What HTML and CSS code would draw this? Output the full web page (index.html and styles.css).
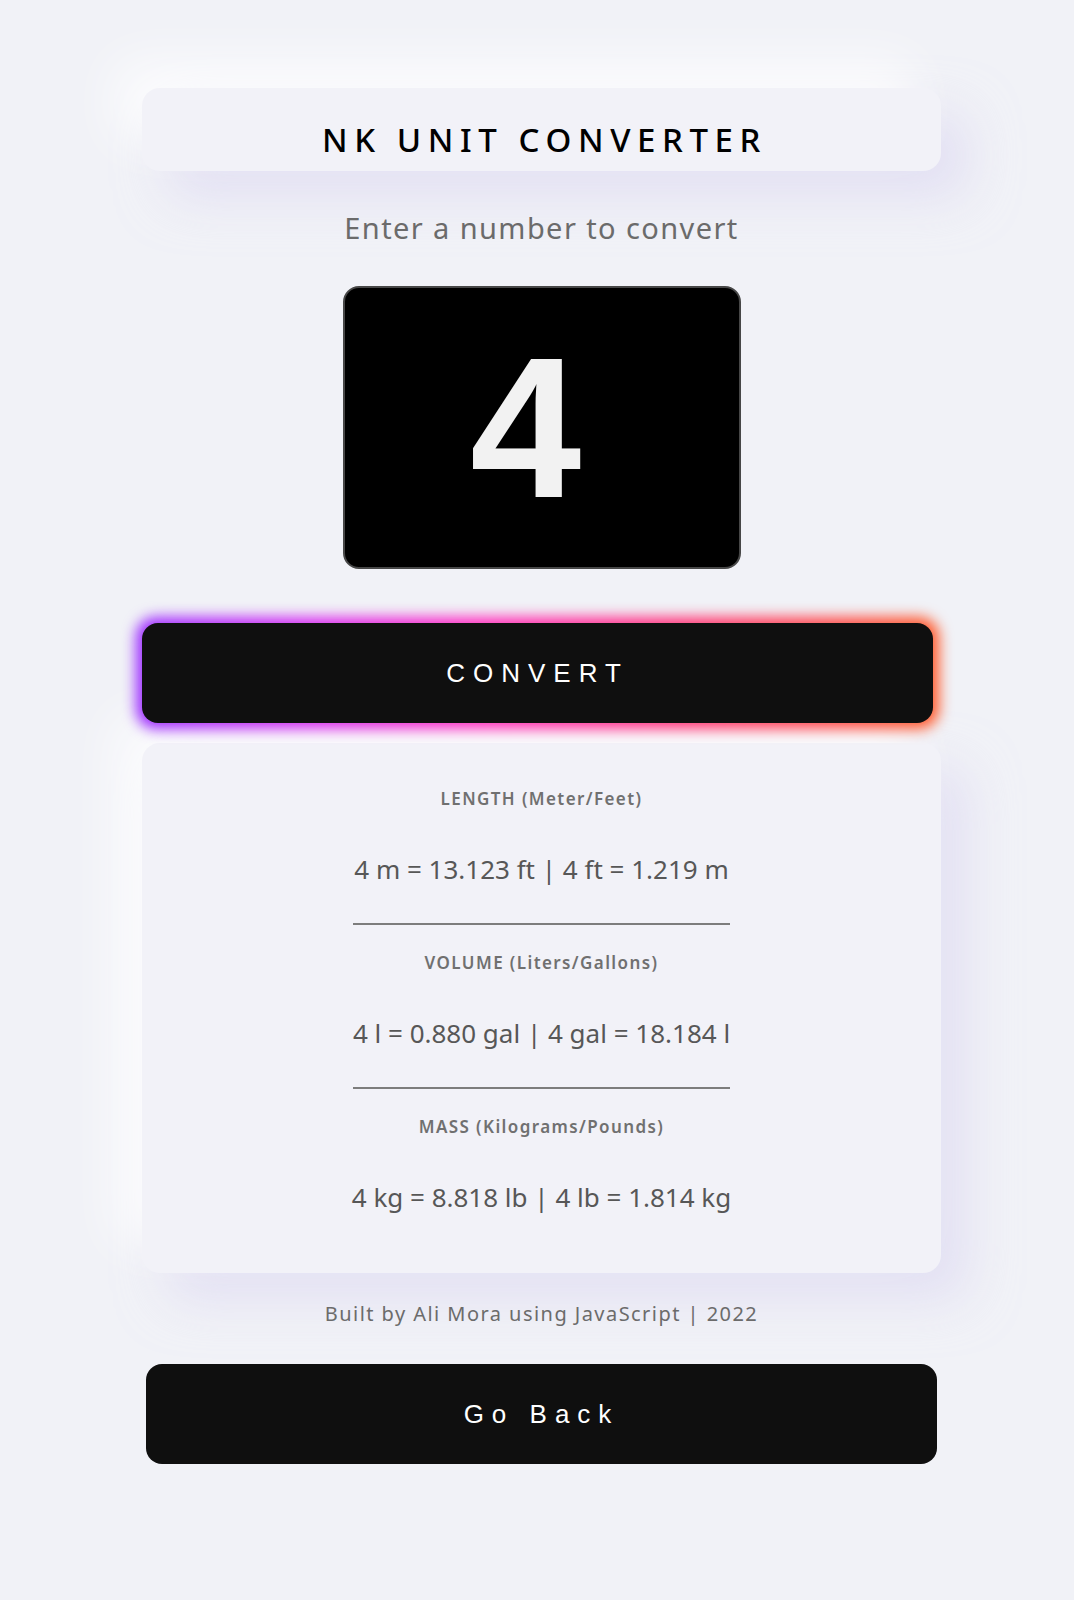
FILE: index.html
```html
<!DOCTYPE html>
<html lang="en">
<head>
<meta charset="utf-8">
<title>NK Unit Converter</title>
<link rel="stylesheet" href="styles.css">
</head>
<body>
<main class="page">
  <header class="card title-card">
    <h1 class="title">NK UNIT CONVERTER</h1>
  </header>
  <p class="prompt">Enter a number to convert</p>
  <input class="number-input" type="text" value="4" aria-label="Number to convert">
  <div class="convert-wrap">
    <button class="btn convert-btn" type="button">CONVERT</button>
  </div>
  <section class="card results">
    <div class="result">
      <h2 class="result-label">LENGTH (Meter/Feet)</h2>
      <p class="result-value">4 m = 13.123 ft | 4 ft = 1.219 m</p>
    </div>
    <hr class="divider">
    <div class="result">
      <h2 class="result-label">VOLUME (Liters/Gallons)</h2>
      <p class="result-value">4 l = 0.880 gal | 4 gal = 18.184 l</p>
    </div>
    <hr class="divider">
    <div class="result">
      <h2 class="result-label">MASS (Kilograms/Pounds)</h2>
      <p class="result-value">4 kg = 8.818 lb | 4 lb = 1.814 kg</p>
    </div>
  </section>
  <p class="footer">Built by Ali Mora using JavaScript | 2022</p>
  <button class="btn back-btn" type="button">Go Back</button>
</main>
</body>
</html>
```

FILE: styles.css
```css
* { box-sizing: border-box; }

html, body {
  margin: 0;
  padding: 0;
  background: #f1f2f7;
}

body {
  font-family: "Noto Sans", "Open Sans", sans-serif;
  min-height: 1600px;
}

.page {
  width: 808px;
  padding-left: 9px;
  margin: 0 auto;
  padding-top: 88px;
  display: flex;
  flex-direction: column;
  align-items: stretch;
}

.card {
  background: #f2f2f8;
  border-radius: 18px;
  box-shadow: -28px -28px 50px rgba(255, 255, 255, 0.75),
              26px 26px 50px rgba(215, 210, 240, 0.55);
}

.title-card {
  height: 83px;
  padding-top: 19px;
  display: flex;
  align-items: center;
  justify-content: center;
}

.title {
  margin: 0;
  font-size: 33px;
  font-weight: 500;
  letter-spacing: 6.6px;
  color: #000;
  padding-left: 6px;
  line-height: 1;
}

.prompt {
  margin: 37px 0 0;
  height: 40px;
  line-height: 40px;
  text-align: center;
  font-size: 29px;
  letter-spacing: 1.4px;
  color: #6b6b6b;
}

.number-input {
  align-self: center;
  margin-top: 38px;
  width: 398px;
  height: 283px;
  background: #000;
  border: 2px solid #474747;
  border-radius: 16px;
  color: #f2f2f2;
  font-family: "Liberation Sans", Arial, sans-serif;
  font-size: 200px;
  font-weight: 700;
  text-align: center;
  padding: 0 32px 0 0;
  outline: none;
}

.convert-wrap {
  position: relative;
  isolation: isolate;
  width: 791px;
  margin-top: 54px;
}

.convert-wrap::before {
  content: "";
  position: absolute;
  inset: -6px;
  border-radius: 20px;
  background: linear-gradient(90deg, #9a2cff 0%, #d62cf0 22%, #ff2cc0 42%, #ff3478 68%, #ff5a28 100%);
  filter: blur(7px);
  z-index: -1;
}

.btn {
  display: block;
  width: 791px;
  height: 100px;
  border: none;
  border-radius: 16px;
  background: #0f0f0f;
  color: #fff;
  font-family: "Liberation Sans", Arial, sans-serif;
  font-size: 26px;
  letter-spacing: 8px;
  padding: 0;
  cursor: pointer;
}

.convert-btn {
  position: relative;
}

.results {
  margin-top: 20px;
  height: 530px;
  padding-top: 46px;
  display: flex;
  flex-direction: column;
  align-items: center;
}

.result {
  display: flex;
  flex-direction: column;
  align-items: center;
}

.result-label {
  margin: 0;
  height: 20px;
  line-height: 20px;
  font-size: 17px;
  font-weight: 600;
  letter-spacing: 1.4px;
  color: #707070;
}

.result-value {
  margin: 45px 0 0;
  height: 30px;
  line-height: 30px;
  font-size: 26px;
  color: #575757;
}

.divider {
  width: 377px;
  height: 0;
  margin: 39px 0 28px;
  border: none;
  border-top: 2px solid #7d7d7d;
}

.footer {
  margin: 28px 0 0;
  height: 26px;
  line-height: 26px;
  text-align: center;
  font-size: 20px;
  letter-spacing: 1.45px;
  color: #6b6b6b;
}

.back-btn {
  margin-top: 37px;
  margin-left: 4px;
}
```
